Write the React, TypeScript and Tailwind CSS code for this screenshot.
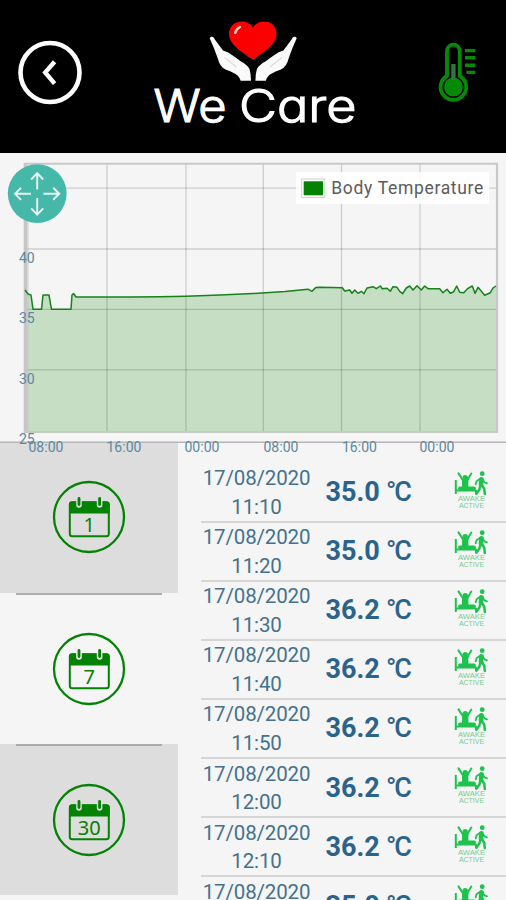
import React from "react";

const GREEN = "#038203";

const readings = [
  { date: "17/08/2020", time: "11:10", value: "35.0" },
  { date: "17/08/2020", time: "11:20", value: "35.0" },
  { date: "17/08/2020", time: "11:30", value: "36.2" },
  { date: "17/08/2020", time: "11:40", value: "36.2" },
  { date: "17/08/2020", time: "11:50", value: "36.2" },
  { date: "17/08/2020", time: "12:00", value: "36.2" },
  { date: "17/08/2020", time: "12:10", value: "36.2" },
  { date: "17/08/2020", time: "12:20", value: "35.0" },
];

const curve =
  "25,290 28,294 31,295 33,309.3 41.5,309.3 43,295 49,295 51.5,309.3 71,309.3 72,295 73.5,293.5 76,297 130,297 160,296.7 186,296.2 220,295 253,293.5 285,291.6 308,289.2 312,291.3 315.7,287.6 319.7,287.3 342.3,287.7 344.7,291 349.7,290 352,293.3 354.7,290 358,293.3 361.3,291.3 364,293.7 367,288 373,286.7 376.3,288.7 380.3,286 382.3,288.7 387,288.3 390.3,291.3 393,286.7 397,287.3 399.7,291.3 402.7,293.7 406.3,288 409.7,286 413,290 417,285.7 421.3,290 424.7,286 428,288.7 439.7,288.7 443,292.7 447,289.3 450.3,293.3 453.7,291.7 456.7,286 459.7,292.3 463.7,292.7 468,288.3 472.3,286 475,293.3 478,287.3 484.7,295.3 490.3,292.7 493,288 496,286";

function Chart() {
  return (
    <svg
      viewBox="0 153 506 302"
      className="relative z-10 block h-[302px] w-[506px] shrink-0"
      fontFamily="Roboto, sans-serif"
    >
      <polygon points={`${curve} 496,432 26,432`} fill="#c6dec3" />
      <g fill="none" stroke="#000" strokeOpacity="0.16" strokeWidth="1.3">
        <path d="M107 164V432M186 164V432M263.3 164V432M341.5 164V432M420 164V432" />
        <path d="M26 188.2H497M26 249H497M26 309.4H497M26 369.8H497" />
      </g>
      <path d="M25.5 163V433" stroke="#c6c6c6" strokeWidth="3.6" />
      <path d="M28 164V431" stroke="#b9c6b8" strokeWidth="0.8" />
      <path d="M24 163.7H498" stroke="#c8c8c8" strokeWidth="2" />
      <path d="M497 163V433" stroke="#c8c8c8" strokeWidth="2.2" />
      <path d="M24 432H498" stroke="#c4ccc4" strokeWidth="2" />
      <polyline points={curve} fill="none" stroke="#17811c" strokeWidth="1.5" strokeLinejoin="round" />
      <path d="M0 442.3H506" stroke="#b5b5b5" strokeWidth="1.5" />

      <rect x="296" y="172" width="193" height="32" fill="#fff" fillOpacity="0.85" />
      <rect x="301.7" y="179" width="23" height="18.5" fill="#fff" stroke="#ccd4cc" />
      <rect x="303.7" y="181.3" width="19.3" height="14" fill={GREEN} />
      <text x="331.3" y="194.3" fontSize="17.5" fill="#5c5c5c" textLength="152">
        Body Temperature
      </text>

      <g fontSize="14" fill="#5d88a0">
        <text x="19" y="262.5">40</text>
        <text x="19" y="323">35</text>
        <text x="19" y="383.5">30</text>
        <text x="19" y="444">25</text>
        <text x="28.5" y="452.4">08:00</text>
        <text x="106.5" y="452.4">16:00</text>
        <text x="184.5" y="452.4">00:00</text>
        <text x="263.5" y="452.4">08:00</text>
        <text x="342" y="452.4">16:00</text>
        <text x="419.5" y="452.4">00:00</text>
      </g>

      <circle cx="37.2" cy="193.6" r="29.4" fill="#46b8a9" />
      <g fill="none" stroke="#e8f7f4" strokeWidth="1.9">
        <path d="M37.2 189.5V173.5M31.2 179.5L37.2 173.2L43.2 179.5" />
        <path d="M37.2 198V214M31.2 208.3L37.2 214.6L43.2 208.3" />
        <path d="M31 193.8H15.5M21 187.8L15 193.8L21 199.8" />
        <path d="M43.5 193.8H59M53.2 187.8L59.3 193.8L53.2 199.8" />
      </g>
    </svg>
  );
}

function Logo() {
  return (
    <svg viewBox="150 15 210 125" className="h-[125px] w-[210px]">
      <path
        d="M253 60C246 54 229 46 229 34C229 26 235 21.5 242 21.5C247 21.5 251 24 253 27.5C255 24 259 21.5 264 21.5C271 21.5 276.5 26 276.5 34C276.5 46 260 54 253 60Z"
        fill="#fb0000"
      />
      <path d="M235.2 32.8Q236.5 28.5 240 27" fill="none" stroke="#ffd0c8" strokeWidth="2.4" strokeLinecap="round" />
      <path
        d="M209.7 38.2C211 36 213.6 36.5 214.5 39L223 50.5Q228 51.5 232 55Q236 57.7 241 61.5Q247 64.5 249.5 69Q251 74 251 80.8H240.6Q239.5 76.5 235.5 74Q231 71 225.5 69.5Q219.5 66.5 218 59Q213.8 47 209.7 38.2Z"
        fill="#fafafa"
      />
      <path
        d="M296.7 38.2C295.4 36 292.8 36.5 291.9 39L283.4 50.5Q278.4 51.5 274.4 55Q270.4 57.7 265.4 61.5Q259.4 64.5 256.9 69Q255.4 74 255.4 80.8H265.8Q266.9 76.5 270.9 74Q275.4 71 280.9 69.5Q286.9 66.5 288.4 59Q292.6 47 296.7 38.2Z"
        fill="#fafafa"
      />
      <path d="M224.5 57.5L236.5 67M281.9 57.5L269.9 67" stroke="#bbb" strokeWidth="0.7" />
      <g
        fill="#fff"
        stroke="#fff"
        strokeWidth="1.1"
        className="font-light [font-feature-settings:'cv11'_1]"
        fontFamily="Inter, sans-serif"
        fontSize="45"
      >
        <text x="153.5" y="122.3" textLength="73" lengthAdjust="spacingAndGlyphs">
          We
        </text>
        <text x="239" y="122.3" textLength="117.5" lengthAdjust="spacingAndGlyphs">
          Care
        </text>
      </g>
    </svg>
  );
}

function Header() {
  return (
    <header className="flex h-[153px] shrink-0 bg-black">
      <svg viewBox="0 0 66 66" className="mt-[39px] ml-[17px] h-[66px] w-[66px]" fill="none" stroke="#fff">
        <circle cx="33" cy="33.5" r="29.5" strokeWidth="4.6" />
        <path d="M37.6 22.8L28.2 33.5L37.6 44.6" strokeWidth="4.4" />
      </svg>
      <div className="mt-[15px] ml-[67px]">
        <Logo />
      </div>
      <svg viewBox="436 40 42 66" className="mt-[40px] ml-[76px] h-[66px] w-[42px]">
        <path
          d="M447 76V51a6.4 6.4 0 0 1 12.8 0V76A12.8 12.8 0 1 1 447 76Z"
          fill="none"
          stroke="#068a06"
          strokeWidth="3.8"
        />
        <circle cx="453.4" cy="87" r="9.4" fill="#068a06" />
        <path d="M453.4 64V80" stroke="#31753a" strokeWidth="4.4" />
        <path d="M465 50.6H475.4M465 57.8H475.4M465 65.2H475.4M466.5 72.4H475.4" stroke="#068a06" strokeWidth="3.4" />
      </svg>
    </header>
  );
}

function CalendarIcon({ day, bg }: { day: string; bg: string }) {
  return (
    <svg viewBox="0 0 74 74" className="h-[74px] w-[74px]">
      <circle cx="37" cy="37" r="35" fill="none" stroke={GREEN} strokeWidth="2.3" />
      <rect x="17.8" y="22.2" width="39" height="34" rx="2.5" fill="none" stroke={GREEN} strokeWidth="2" />
      <path d="M17 33.5V24q0-2.6 2.6-2.6H55q2.6 0 2.6 2.6V33.5Z" fill={GREEN} />
      <path d="M27 20V25M47.6 20V25" stroke={bg} strokeWidth="5.6" strokeLinecap="round" />
      <path d="M27 18.4V24.6M47.6 18.4V24.6" stroke={GREEN} strokeWidth="2.8" strokeLinecap="round" />
      <text x="37.2" y="51.8" textAnchor="middle" fontSize="20" fill={GREEN} fontFamily="'Noto Sans', sans-serif">
        {day}
      </text>
    </svg>
  );
}

function AwakeIcon() {
  return (
    <svg viewBox="0 0 36 38" className="mb-[5px] h-[38px] w-[36px]">
      <g stroke="#1fc24e" fill="none" strokeLinecap="round" strokeLinejoin="round">
        <path d="M1.8 9V23M1.8 19.6H22V23.4" strokeWidth="2" strokeLinecap="butt" />
        <path d="M4.5 2.4L8.6 8.8M17.3 2.6L13.6 8.8" strokeWidth="2" />
        <path d="M11.2 8V17" strokeWidth="6.4" strokeLinecap="butt" />
        <path d="M6 17.4H20" strokeWidth="3.8" />
        <path d="M27.5 8.2L27 14" strokeWidth="4.6" />
        <path d="M26.5 7.5L22.5 10.2L21.7 13.3M28.5 8L30.5 11.4L33 12.3" strokeWidth="1.8" />
        <path d="M26.5 14L25.4 18.5L22.5 22.5M27.8 14L30.3 17.8L30.8 23" strokeWidth="2.5" />
      </g>
      <circle cx="11.2" cy="6.8" r="2.7" fill="#1fc24e" />
      <circle cx="28.2" cy="2.7" r="2.4" fill="#1fc24e" />
      <g fill="#72cd90" fontFamily="'Liberation Sans', Arial, sans-serif" fontSize="7.4">
        <text x="4" y="29.8" textLength="27" lengthAdjust="spacingAndGlyphs">
          AWAKE
        </text>
        <text x="5" y="36.8" textLength="25" lengthAdjust="spacingAndGlyphs">
          ACTIVE
        </text>
      </g>
    </svg>
  );
}

export default function App() {
  return (
    <div className="flex h-[900px] w-[506px] flex-col overflow-hidden bg-[#f5f5f5] font-[Roboto,sans-serif]">
      <Header />
      <section className="h-[289px] shrink-0">
        <Chart />
      </section>
      <main className="flex h-[458px] shrink-0">
        <nav className="flex w-[178px] shrink-0 flex-col">
          <div className="flex h-[151px] items-center justify-center bg-[#dddddd] pb-[1px]">
            <CalendarIcon day="1" bg="#dddddd" />
          </div>
          <div className="mx-[16px] h-[2px] w-[146px] shrink-0 bg-[#adadad]" />
          <div className="flex h-[149px] items-center justify-center pb-[2px]">
            <CalendarIcon day="7" bg="#f5f5f5" />
          </div>
          <div className="flex h-[151px] flex-col items-center bg-[#dddddd]">
            <div className="mr-[1px] h-[2px] w-[146px] shrink-0 bg-[#adadad]" />
            <div className="mt-[37px]">
              <CalendarIcon day="30" bg="#dddddd" />
            </div>
          </div>
        </nav>
        <ul className="ml-[22.5px] flex flex-1 flex-col pt-[21.5px] text-[#44718e]">
          {readings.map((r) => (
            <li key={r.time} className="flex h-[59.1px] shrink-0 items-center border-b-2 border-[#d6d6d6]">
              <div className="w-[112px] shrink-0 pt-[1px] text-center text-[20.5px] leading-[28.5px] tracking-[-0.15px]">
                <div>{r.date}</div>
                <div>{r.time}</div>
              </div>
              <div className="ml-[13px] flex w-[128px] shrink-0 text-[27px] leading-[30px] font-bold text-[#2c638a]">
                <span className="w-[60.5px]">{r.value}</span>
                <span className="font-medium tracking-[-2px]">°C</span>
              </div>
              <AwakeIcon />
            </li>
          ))}
        </ul>
      </main>
    </div>
  );
}
